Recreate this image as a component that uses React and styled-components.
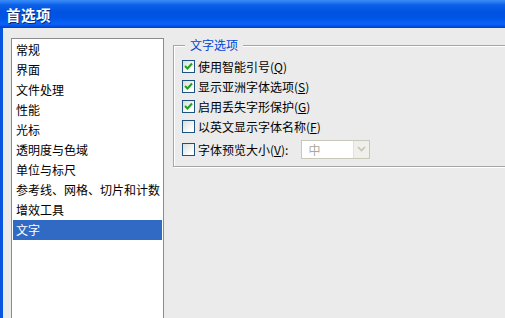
import React, { useState } from 'react';
import styled, { createGlobalStyle } from 'styled-components';

const GlobalStyle = createGlobalStyle`
    html, body {
        margin: 0;
        padding: 0;
        background: #ebebeb;
    }
    * {
        box-sizing: border-box;
    }
`;

const StyledWindow = styled.div`
    width: 505px;
    height: 318px;
    overflow: hidden;
    display: flex;
    flex-direction: column;
    font-family: "Noto Sans CJK SC", "Liberation Sans", sans-serif;
    font-size: 12px;
    color: #000;
`;

const TitleBar = styled.div`
    height: 28px;
    flex: none;
    display: flex;
    align-items: center;
    padding-left: 6px;
    background: linear-gradient(
        to bottom,
        #3a8cf5 0px,
        #2a7cf4 2px,
        #0a5fe8 5px,
        #0053e0 12px,
        #0055e6 18px,
        #0a62fb 24px,
        #0552e4 26px,
        #003ec4 28px
    );
    color: #fff;
    font-size: 14.5px;
    font-weight: bold;
    text-shadow: 1px 1px 0 #0a2a7a;
    letter-spacing: 0.5px;
`;

const Body = styled.div`
    flex: 1;
    display: flex;
    align-items: flex-start;
    padding: 10px 0 0 8px;
    border-left: 3px solid #0a55e0;
    background: #ebebeb;
`;

const CategoryList = styled.ul`
    list-style: none;
    margin: 0;
    padding: 1px 1px 0 1px;
    width: 153px;
    height: 300px;
    flex: none;
    background: #fff;
    border: 1px solid #8c8c8c;
`;

const CategoryItem = styled.li`
    height: 20px;
    line-height: 19px;
    padding-left: 3px;
    font-size: 12px;
    white-space: nowrap;
    background: ${(p) => (p.$active ? '#316ac5' : 'transparent')};
    color: ${(p) => (p.$active ? '#fff' : '#000')};
    cursor: default;
`;

const Group = styled.div`
    position: relative;
    margin: 7px 0 0 9px;
    width: 345px;
    height: 122px;
    flex: none;
    border: 1px solid #a6a6a6;
    box-shadow: 1px 1px 0 #fff, inset 1px 1px 0 #fff;
    padding: 10px 0 0 8px;
    display: flex;
    flex-direction: column;
`;

const Legend = styled.span`
    position: absolute;
    top: -9px;
    left: 11px;
    padding: 0 5px;
    background: #ebebeb;
    color: #0046d5;
    font-size: 12px;
    line-height: 16px;
`;

const Row = styled.label`
    height: 20px;
    display: flex;
    align-items: center;
    gap: 3px;
    white-space: nowrap;
    cursor: default;
`;

const Box = styled.span`
    width: 13px;
    height: 13px;
    flex: none;
    border: 1px solid #1c5180;
    background: linear-gradient(135deg, #dcdcd7 0%, #fff 80%);
    display: flex;
    align-items: center;
    justify-content: center;
`;

const Key = styled.span`
    text-decoration: underline;
`;

const LastRow = styled(Row)`
    height: 22px;
    margin-top: 2px;
`;

const Select = styled.div`
    margin-left: 10px;
    width: 69px;
    height: 19px;
    display: flex;
    border: 1px solid #c9c7ba;
    background: #fff;
`;

const SelectValue = styled.span`
    flex: 1;
    padding-left: 6px;
    line-height: 17px;
    color: #aca899;
`;

const SelectButton = styled.span`
    width: 16px;
    flex: none;
    background: #f0f0ea;
    border-left: 1px solid #e3e2da;
    display: flex;
    align-items: center;
    justify-content: center;
`;

const Check = () => (
    <svg width="9" height="9" viewBox="0 0 9 9">
        <path d="M1 4 L3.5 6.5 L8 1.5" fill="none" stroke="#21a121" strokeWidth="2" />
    </svg>
);

const Chevron = () => (
    <svg width="9" height="6" viewBox="0 0 9 6">
        <path d="M1 1 L4.5 4.5 L8 1" fill="none" stroke="#c5c3b8" strokeWidth="1.6" />
    </svg>
);

const categories = [
    '常规',
    '界面',
    '文件处理',
    '性能',
    '光标',
    '透明度与色域',
    '单位与标尺',
    '参考线、网格、切片和计数',
    '增效工具',
    '文字',
];

const options = [
    { label: '使用智能引号', key: 'Q', on: true },
    { label: '显示亚洲字体选项', key: 'S', on: true },
    { label: '启用丢失字形保护', key: 'G', on: true },
    { label: '以英文显示字体名称', key: 'F', on: false },
];

const App = () => {
    const [active, setActive] = useState('文字');

    return (
        <StyledWindow>
            <GlobalStyle />
            <TitleBar>首选项</TitleBar>
            <Body>
                <CategoryList>
                    {categories.map((c) => (
                        <CategoryItem key={c} $active={c === active} onClick={() => setActive(c)}>
                            {c}
                        </CategoryItem>
                    ))}
                </CategoryList>
                <Group>
                    <Legend>文字选项</Legend>
                    {options.map((o) => (
                        <Row key={o.key}>
                            <Box>{o.on && <Check />}</Box>
                            <span>
                                {o.label}(<Key>{o.key}</Key>)
                            </span>
                        </Row>
                    ))}
                    <LastRow>
                        <Box />
                        <span>
                            字体预览大小(<Key>V</Key>):
                        </span>
                        <Select>
                            <SelectValue>中</SelectValue>
                            <SelectButton>
                                <Chevron />
                            </SelectButton>
                        </Select>
                    </LastRow>
                </Group>
            </Body>
        </StyledWindow>
    );
};

export default App;
